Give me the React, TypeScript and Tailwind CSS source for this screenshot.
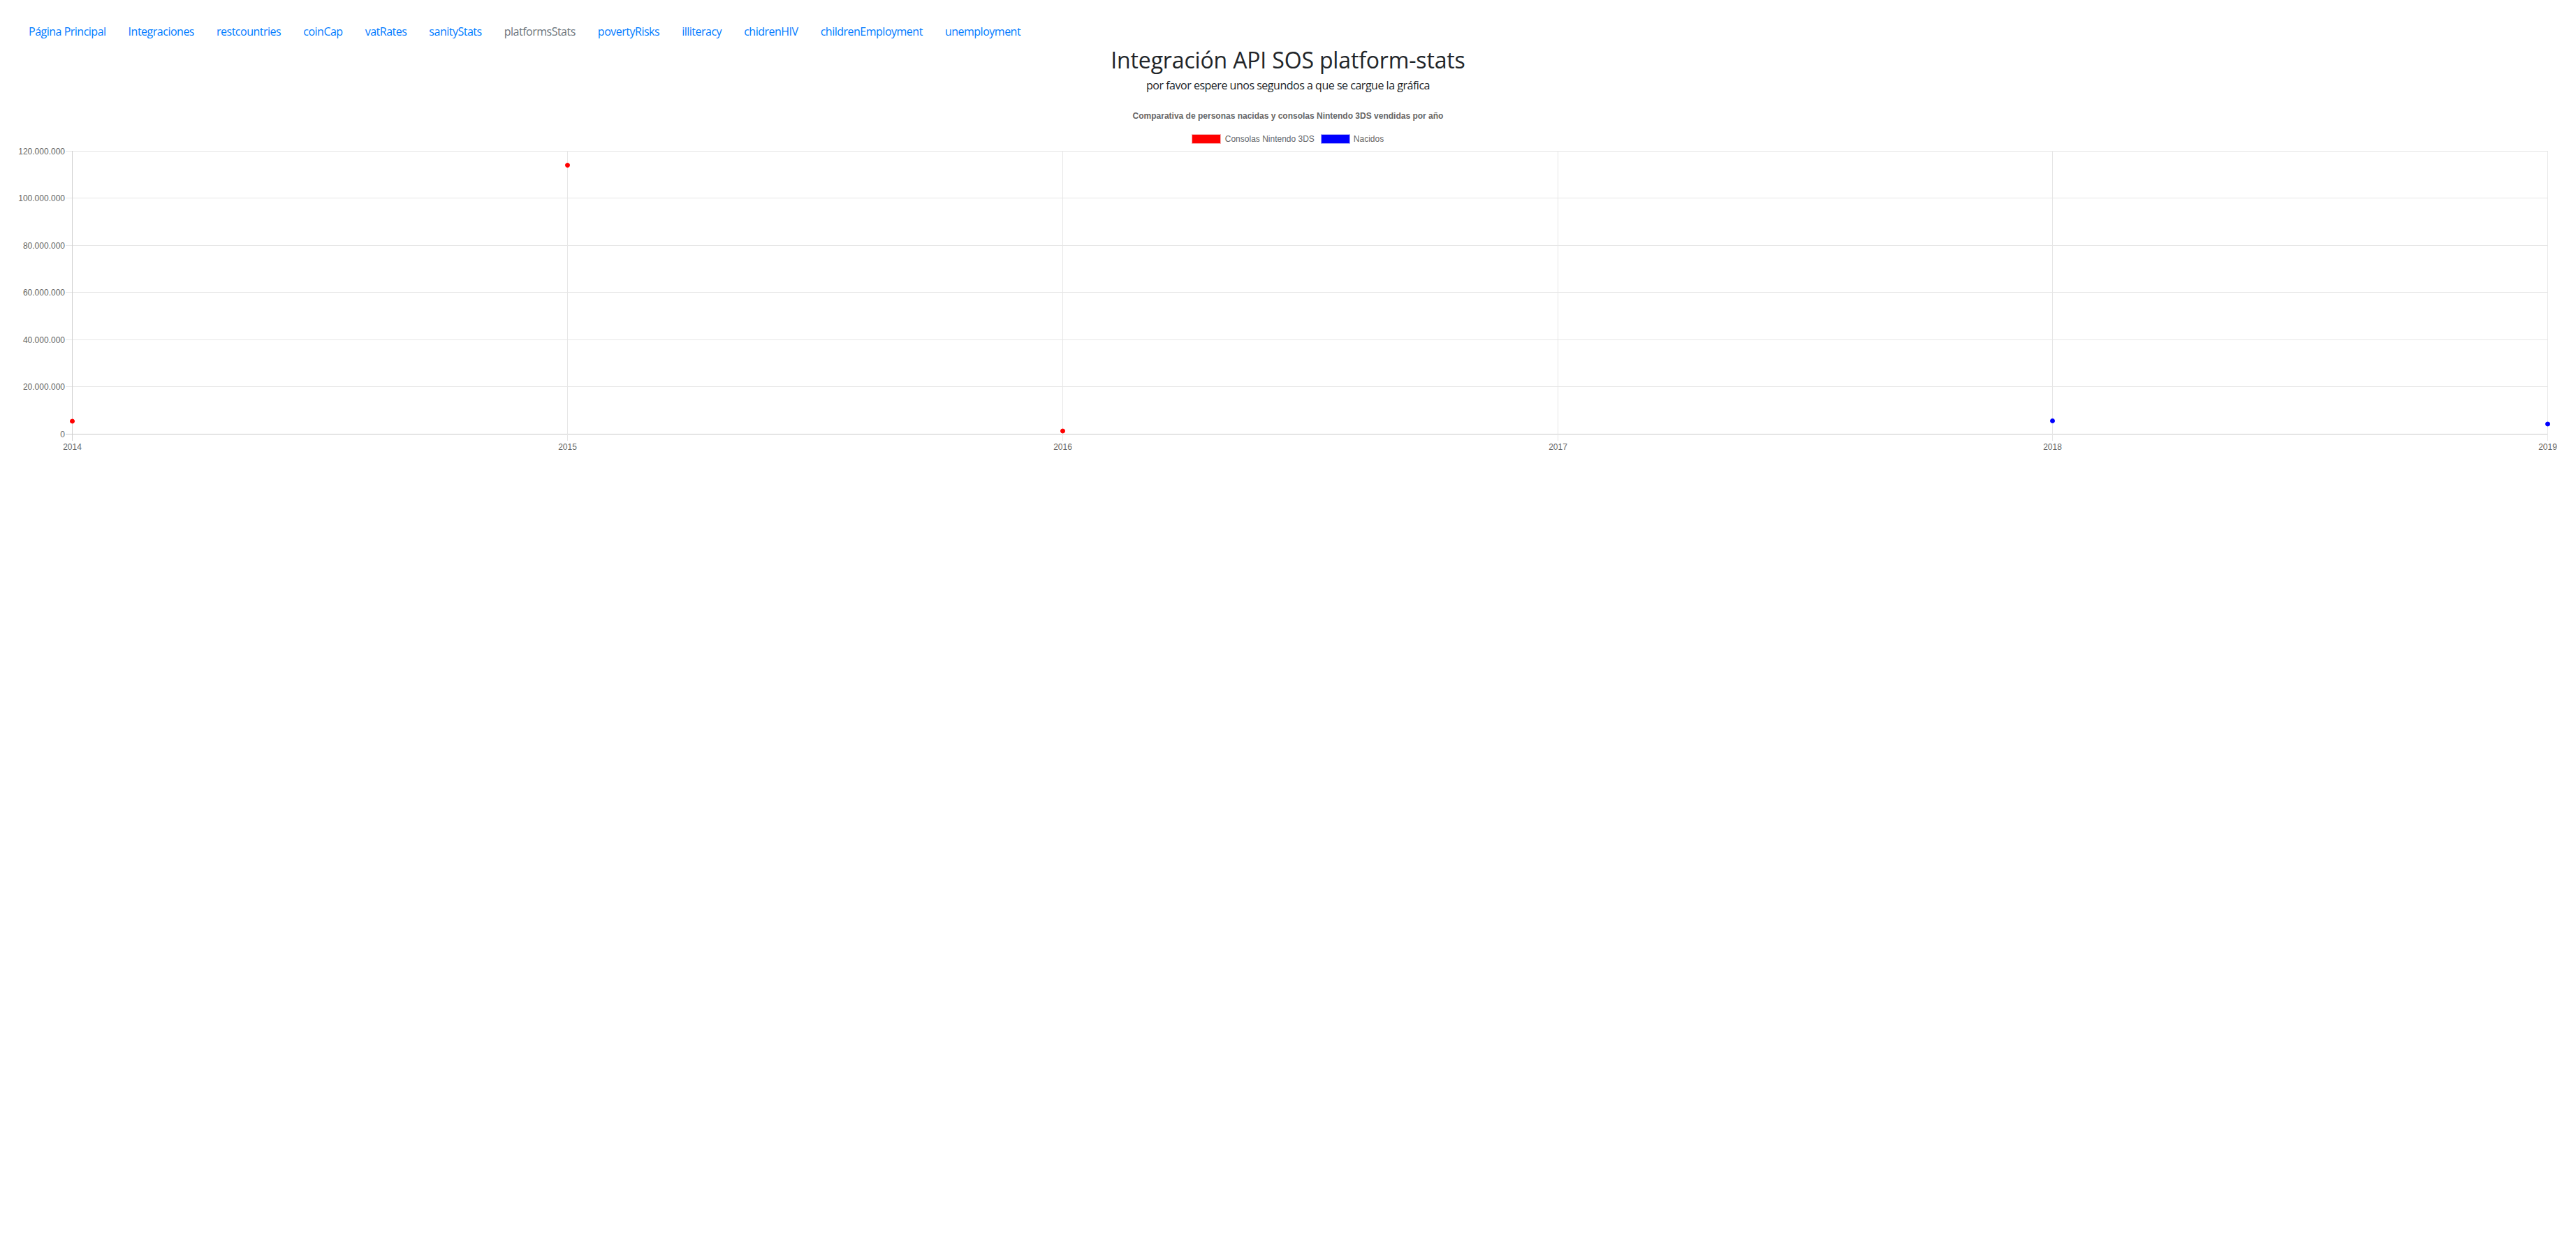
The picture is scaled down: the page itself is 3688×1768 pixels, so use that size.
import React from "react";

const links = [
  "Página Principal",
  "Integraciones",
  "restcountries",
  "coinCap",
  "vatRates",
  "sanityStats",
  "platformsStats",
  "povertyRisks",
  "illiteracy",
  "chidrenHIV",
  "childrenEmployment",
  "unemployment",
];

const yTicks = [
  { label: "120.000.000", y: 10.5 },
  { label: "100.000.000", y: 77.5 },
  { label: "80.000.000", y: 145.5 },
  { label: "60.000.000", y: 212.5 },
  { label: "40.000.000", y: 280.5 },
  { label: "20.000.000", y: 347.5 },
  { label: "0", y: 415.5 },
];

const xTicks = [
  { label: "2014", x: 103.5 },
  { label: "2015", x: 812.5 },
  { label: "2016", x: 1521.5 },
  { label: "2017", x: 2230.5 },
  { label: "2018", x: 2938.5 },
  { label: "2019", x: 3647.5 },
];

const points = [
  { x: 103.5, y: 397, c: "#ff0000" },
  { x: 812.5, y: 30.5, c: "#ff0000" },
  { x: 1521.5, y: 411, c: "#ff0000" },
  { x: 2938.5, y: 396.5, c: "#0000ff" },
  { x: 3647.5, y: 401, c: "#0000ff" },
];

export default function App() {
  return (
    <div className="min-h-screen w-full bg-white" style={{ fontFamily: '"Open Sans", "Noto Sans", sans-serif' }}>
      <nav className="flex flex-row pl-[25px] pt-[25px] text-[16px] leading-[24px]">
        {links.map((l) => (
          <a
            key={l}
            href="#"
            className={
              "px-4 py-2 tracking-[-0.031em] " +
              (l === "platformsStats" ? "text-[#6c757d]" : "text-[#007bff]")
            }
          >
            {l}
          </a>
        ))}
      </nav>
      <div className="flex flex-col items-center">
        <h1 className="text-[32px] leading-[38px] font-medium text-[#212529] tracking-[-0.005em] mt-[2px]">
          Integración API SOS platform-stats
        </h1>
        <p className="text-[16px] leading-[24px] text-[#212529] mt-[5px] tracking-[-0.03em]">
          por favor espere unos segundos a que se cargue la gráfica
        </p>
        <div
          className="mt-[25px] text-[12px] leading-[14px] font-bold text-[#666666]"
          style={{ fontFamily: '"Liberation Sans", Arial, sans-serif' }}
        >
          Comparativa de personas nacidas y consolas Nintendo 3DS vendidas por año
        </div>
        <div
          className="mt-[19px] flex flex-row items-center text-[12px] leading-[14px] text-[#666666]"
          style={{ fontFamily: '"Liberation Sans", Arial, sans-serif' }}
        >
          <span className="w-[40px] h-[12px] bg-[#ff0000] ring-1 ring-[#f7b0b0]" />
          <span className="ml-[7px]">Consolas Nintendo 3DS</span>
          <span className="ml-[10px] w-[40px] h-[12px] bg-[#0000ff] ring-1 ring-[#b0b0f7]" />
          <span className="ml-[6px]">Nacidos</span>
        </div>
      </div>
      <svg
        width="3688"
        height="460"
        viewBox="0 0 3688 460"
        className="block"
        style={{ fontFamily: '"Liberation Sans", Arial, sans-serif' }}
      >
        {yTicks.map((t, i) => (
          <g key={t.label}>
            <line
              x1={94}
              x2={3648}
              y1={t.y}
              y2={t.y}
              stroke={i === yTicks.length - 1 ? "#c8c8c8" : "#e6e6e6"}
              strokeWidth={1}
            />
            <text x={93} y={t.y + 4.3} textAnchor="end" fontSize={12} fill="#666666">
              {t.label}
            </text>
          </g>
        ))}
        {xTicks.map((t, i) => (
          <g key={t.label}>
            <line
              x1={t.x}
              x2={t.x}
              y1={10}
              y2={425}
              stroke={i === 0 ? "#d0d0d0" : "#e6e6e6"}
              strokeWidth={1}
            />
            <text x={t.x} y={438} textAnchor="middle" fontSize={12} fill="#666666">
              {t.label}
            </text>
          </g>
        ))}
        {points.map((p, i) => (
          <circle key={i} cx={p.x} cy={p.y} r={3} fill={p.c} stroke={p.c} strokeWidth={1} />
        ))}
      </svg>
    </div>
  );
}
